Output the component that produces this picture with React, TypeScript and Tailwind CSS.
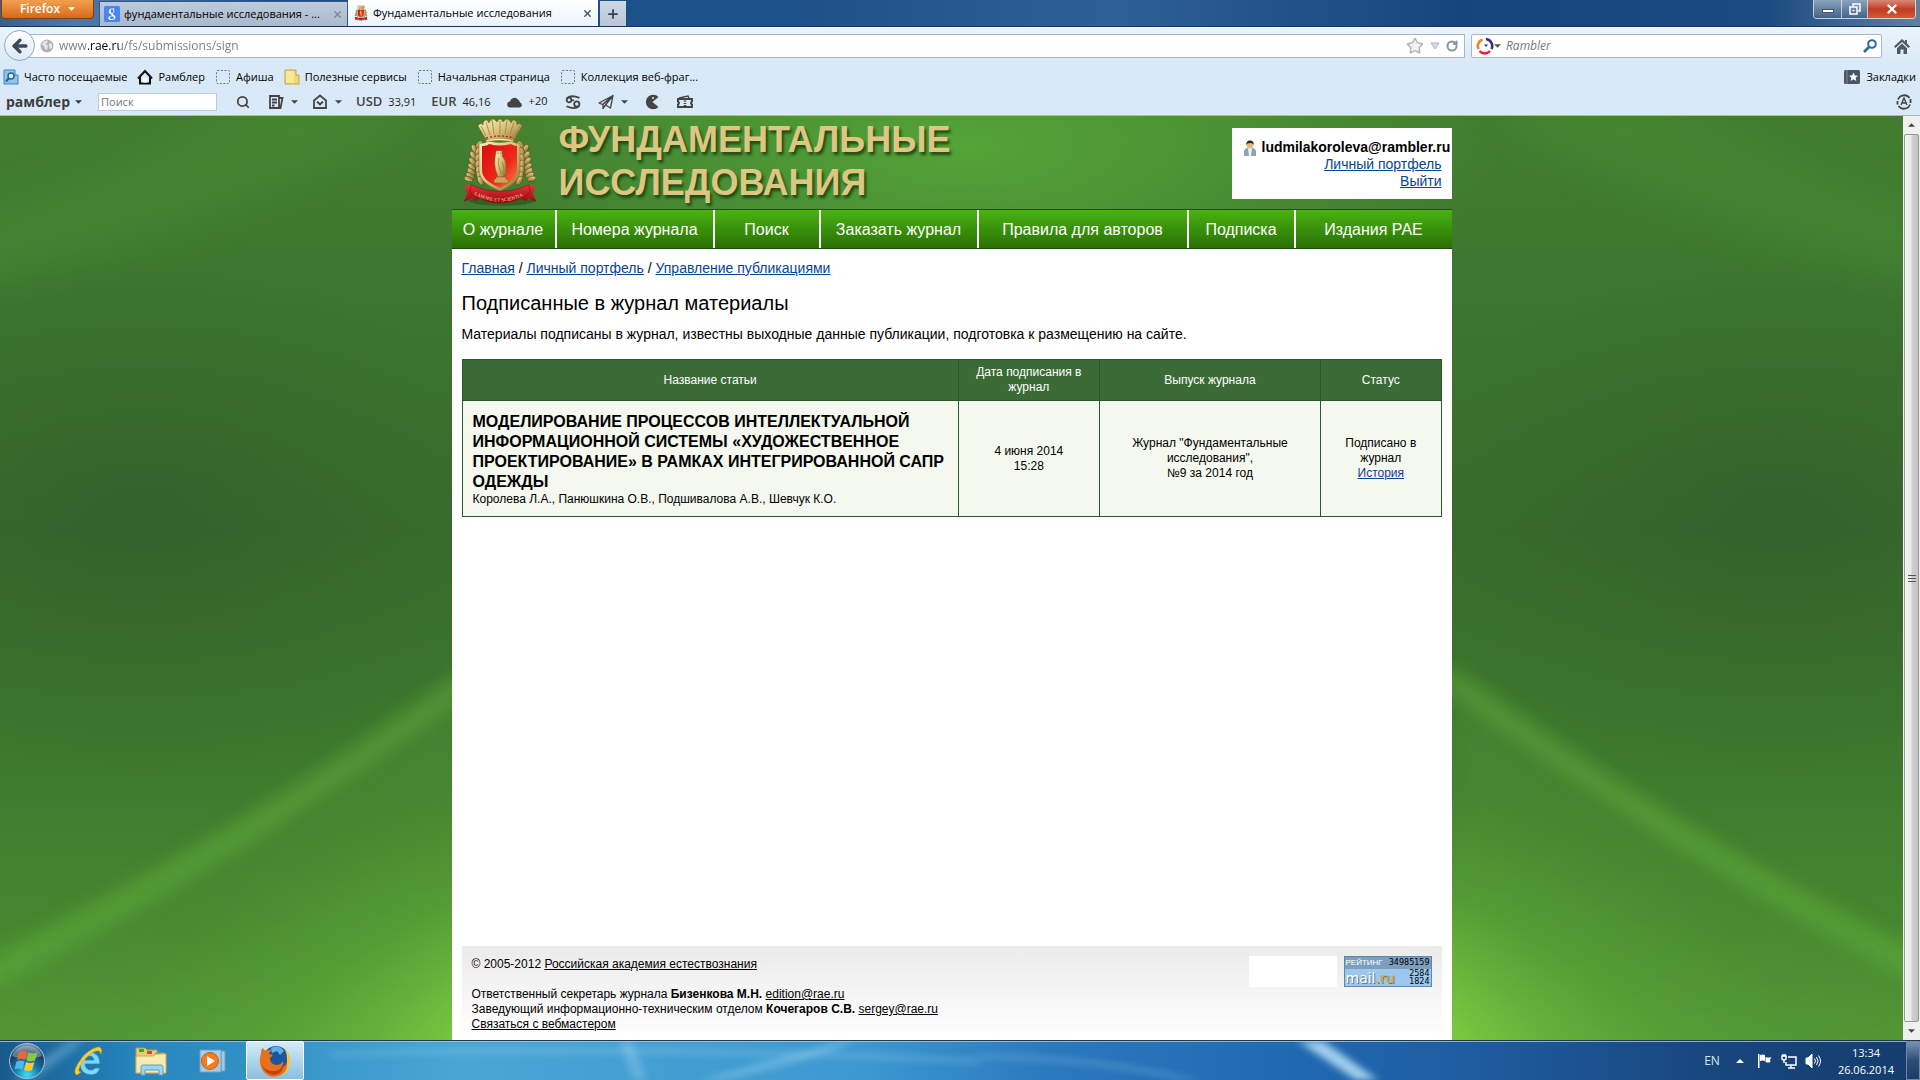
import React from 'react';
import { Search, RotateCw, Star, ArrowLeft, X, Plus } from 'lucide-react';

const navItems = [
  { title: 'О журнале', width: 'w-[10.5%]' },
  { title: 'Номера журнала', width: 'w-[15.8%]' },
  { title: 'Поиск', width: 'w-[10.6%]' },
  { title: 'Заказать журнал', width: 'w-[15.8%]' },
  { title: 'Правила для авторов', width: 'w-[21%]' },
  { title: 'Подписка', width: 'w-[10.7%]' },
  { title: 'Издания РАЕ', width: 'w-[15.6%]' },
];

const bookmarks = [
  { title: 'Часто посещаемые', icon: 'often' },
  { title: 'Рамблер', icon: 'home' },
  { title: 'Афиша', icon: 'blank' },
  { title: 'Полезные сервисы', icon: 'folder' },
  { title: 'Начальная страница', icon: 'blank' },
  { title: 'Коллекция веб-фраг...', icon: 'blank' },
];

const Caret = ({ className }: { className?: string }) => (
  <svg viewBox="0 0 8 4" className={`h-1 w-[7px] shrink-0 fill-current ${className ?? ''}`}>
    <path d="M0 0h8L4 4z" />
  </svg>
);

// Emblem with crown, shield, laurel wreath and ribbon
const Crest = ({ className }: { className?: string }) => {
  const leaves = [0, 1, 2, 3, 4, 5, 6];
  return (
    <svg viewBox="0 0 74 90" className={className}>
      <defs>
        <linearGradient id="gold" x1="0" y1="0" x2="1" y2="1">
          <stop offset="0" stopColor="#fbf3c4" />
          <stop offset="0.5" stopColor="#d8c07a" />
          <stop offset="1" stopColor="#8f7130" />
        </linearGradient>
        <linearGradient id="leaf" x1="0" y1="0" x2="1" y2="1">
          <stop offset="0" stopColor="#f6ebb4" />
          <stop offset="0.4" stopColor="#c8ae66" />
          <stop offset="1" stopColor="#6b5722" />
        </linearGradient>
        <linearGradient id="shield" x1="0" y1="0" x2="1" y2="1">
          <stop offset="0" stopColor="#d80d12" />
          <stop offset="0.6" stopColor="#ee281c" />
          <stop offset="1" stopColor="#f98a3a" />
        </linearGradient>
        <linearGradient id="ribbon" x1="0" y1="0" x2="0" y2="1">
          <stop offset="0" stopColor="#e8343a" />
          <stop offset="1" stopColor="#99060f" />
        </linearGradient>
      </defs>
      <ellipse cx="39" cy="82" rx="34" ry="6" fill="#173d10" opacity="0.4" />
      {/* crown */}
      <path d="M22 20 15 8q2-4 5-1 0-5 4-5l2 3q1-4 5-4l3 3q3-6 6 0l3-3q4 0 5 4l2-3q4 0 4 5 3-3 5 1l-7 12-1 3q-14-3-25 0z" fill="url(#gold)" stroke="#8a6b2c" strokeWidth="0.7" />
      <path d="m23 18-5-10m9 9-4-13m8 12-2-14m8 14V3m5 13 2-14m3 14 4-12m1 13 5-9" stroke="#9d7d39" strokeWidth="0.8" fill="none" />
      <path d="M23 20q14-4 28 0" stroke="#bd2b20" strokeWidth="1.400" strokeDasharray="2 2" fill="none" />
      <path d="M23 23q14-3 27 0" stroke="#f6e8a6" strokeWidth="1.400" fill="none" />
      {/* wreath */}
      {leaves.map(i => (
        <g key={i} fill="url(#leaf)" stroke="#51420f" strokeWidth="0.5">
          <ellipse cx={16 - i * 1.4 + (i * i) / 3} cy={27 + i * 6.6} rx="2.6" ry="4.8" transform={`rotate(${35 - i * 10} ${16 - i} ${27 + i * 7})`} />
          <ellipse cx={11 - i * 1.2 + (i * i) / 3} cy={31 + i * 6.4} rx="2.5" ry="4.6" transform={`rotate(${-25 - i * 8} ${11 - i} ${30 + i * 7})`} />
          <ellipse cx={58 + i * 1.4 - (i * i) / 3} cy={27 + i * 6.6} rx="2.6" ry="4.8" transform={`rotate(${-35 + i * 10} ${58 + i} ${27 + i * 7})`} />
          <ellipse cx={63 + i * 1.2 - (i * i) / 3} cy={31 + i * 6.4} rx="2.5" ry="4.6" transform={`rotate(${25 + i * 8} ${63 + i} ${30 + i * 7})`} />
        </g>
      ))}
      {/* shield */}
      <path d="M16 25q6 1 9-2 12 3 24 0 3 3 8 2v27c0 10-9 16-20 21-12-5-21-11-21-21z" fill="url(#gold)" stroke="#8f7130" strokeWidth="0.7" />
      <path d="M19 28q5 0 7-2 11 3 22 0 2 2 6 2v24c0 8-7 13-17 18-11-5-18-10-18-18z" fill="url(#shield)" />
      {/* owl */}
      <path d="M33 34q0-2 1-1 2-1 4 0 2-1 1 1 1 2 0 4 4 4 4 10v9h-2l-1 2h-5l-1-3q-4-9-1-22z" fill="url(#gold)" stroke="#7d5d25" strokeWidth="0.5" />
      <path d="M33 59h10v2h2v4H31v-4h2z" fill="#cda35a" stroke="#7d5d25" strokeWidth="0.5" />
      <path d="M36 40q-2 9 3 16m0-12q3 6 2 12" stroke="#92722f" strokeWidth="0.7" fill="none" />
      <circle cx="35" cy="35" r="0.6" fill="#4d3512" />
      <circle cx="38" cy="35" r="0.6" fill="#4d3512" />
      {/* ribbon */}
      <path d="M2 67h11l4 14-6 2-2-3-8 4 3-8z" fill="url(#ribbon)" />
      <path d="M72 67H61l-4 14 6 2 2-3 8 4-3-8z" fill="url(#ribbon)" />
      <path id="motto" d="M10 76q27 15 54 0" fill="none" />
      <path d="M8 67q29 13 58 0l1 8q-30 20-60 0z" fill="url(#ribbon)" stroke="#7d060d" strokeWidth="0.5" />
      <text fill="#f3d9a2" fontSize="5" fontFamily="Liberation Serif">
        <textPath href="#motto" startOffset="1">LABORE ET SCIENTIA</textPath>
      </text>
    </svg>
  );
};

const GoogleIcon = () => (
  <svg viewBox="0 0 16 16" className="size-4 shrink-0">
    <rect width="16" height="16" rx="1.500" fill="#4787ed" />
    <path d="M10.600 2.400H8C5.700 2.400 4.800 4 4.800 5.400 4.800 7 6 8 7.500 8c-.5.900-.1 1.300.2 1.700-2.200 0-3.400 1-3.400 2.200 0 1.300 1.400 2.100 3.200 2.100 2.400 0 3.900-1.100 3.900-2.800 0-2.300-2.500-2.100-2.500-3.200 0-.7 1.400-1.100 1.400-2.900 0-.9-.4-1.500-.8-1.900h.8zM8 3.100c1.800 0 2.100 4.200.2 4.200-1.700 0-2.200-4.200-.2-4.200zm0 7.200c2.700.2 2.500 2.900-.3 2.900-2.600 0-2.600-2.700.3-2.900z" fill="#fff" />
  </svg>
);

const BookmarkIcon = ({ icon }: { icon: string }) => {
  if (icon === 'home') {
    return (
      <svg viewBox="0 0 16 16" className="size-4 shrink-0" fill="none" stroke="#111" strokeWidth="2">
        <path d="M1 9.500 8 2l7 7.500M3 8v6.500h10V8" />
        <path d="M8 8.500v5" stroke="#fff" strokeWidth="4" />
      </svg>
    );
  }
  if (icon === 'folder') {
    return (
      <svg viewBox="0 0 16 16" className="size-4 shrink-0">
        <path d="M1 1h11v5h3v9H1z" fill="#f2d675" stroke="#c9a640" />
        <path d="M2 2h8v12H2z" fill="#fae79a" />
      </svg>
    );
  }
  if (icon === 'often') {
    return (
      <svg viewBox="0 0 16 16" className="size-4 shrink-0">
        <path d="M1 1h11v5h3v9H1z" fill="#8dc6ea" stroke="#3f86b8" />
        <circle cx="8" cy="7" r="3" fill="#d9effb" stroke="#27618d" strokeWidth="1.400" />
        <path d="m6 9-3 3.500" stroke="#27618d" strokeWidth="2" />
      </svg>
    );
  }
  return (
    <svg viewBox="0 0 16 16" className="size-4 shrink-0" fill="none" stroke="#707880">
      <rect x="1.500" y="1.500" width="13" height="13" rx="1" strokeDasharray="2 1.500" />
    </svg>
  );
};

const Tabs = () => (
  <div className="flex h-[27px] items-start border-b border-[#16365f] bg-[linear-gradient(90deg,#3a5f8c_0%,#5079a8_4%,#1c5088_14%,#1c5088_40%,#2d6096_58%,#164579_76%,#1a4a80_92%,#61809f_100%)]">
    <button className="ml-px flex h-[19px] w-[93px] items-center justify-center gap-2 rounded-b border border-t-0 border-[#8c3d0c] bg-linear-to-b from-[#f0a050] to-[#d9690f] text-xs font-semibold text-white">
      Firefox <Caret />
    </button>
    <div className="ml-[5px] flex h-[25px] w-[249px] items-center gap-1 self-end border-x border-t border-[#37587f] bg-linear-to-b from-[#bdcbdc] to-[#a9bacd] px-1 text-[11px] text-black">
      <GoogleIcon />
      <span className="flex-1 truncate">фундаментальные исследования - ...</span>
      <button aria-label="Закрыть"><X className="size-[11px] text-[#7c8896]" strokeWidth={3} /></button>
    </div>
    <div className="flex h-[26px] w-[250px] items-center gap-1 self-end bg-linear-to-b from-white to-[#eaf3fc] px-[5px] text-[11px] text-black">
      <Crest className="size-4 shrink-0" />
      <span className="flex-1 truncate">Фундаментальные исследования</span>
      <button aria-label="Закрыть"><X className="size-[11px] text-[#43505e]" strokeWidth={3} /></button>
    </div>
    <button aria-label="Новая вкладка" className="ml-0.5 flex h-[25px] w-[26px] items-center justify-center self-end bg-linear-to-b from-[#cdd9e5] to-[#b9c6d4]">
      <Plus className="size-3.5 text-[#34404d]" strokeWidth={3} />
    </button>
    <div className="mr-1 ml-auto flex h-[19px] overflow-hidden rounded-b border border-t-0 border-white/70">
      <button aria-label="Свернуть" className="flex w-7 items-center justify-center border-r border-white/60 bg-linear-to-b from-[#8ba2bb] to-[#45648a]">
        <span className="mt-1 h-1 w-3 border border-[#44566c] bg-white" />
      </button>
      <button aria-label="Восстановить" className="flex w-[26px] items-center justify-center border-r border-white/60 bg-linear-to-b from-[#8ba2bb] to-[#45648a]">
        <svg viewBox="0 0 12 12" className="size-3" fill="none" stroke="#fff" strokeWidth="1.500">
          <path d="M4 3V1h7v7H9" />
          <rect x="1" y="4" width="7" height="7" />
          <path d="M3.500 7.500h2" />
        </svg>
      </button>
      <button aria-label="Закрыть окно" className="flex w-[47px] items-center justify-center bg-linear-to-b from-[#d98878] via-[#c23a22] to-[#d55a38]">
        <X className="size-3.5 text-white" strokeWidth={4} />
      </button>
    </div>
  </div>
);

const AddressBar = () => (
  <div className="flex h-[37px] items-center bg-linear-to-b from-[#ebf4fc] to-[#dae9f7] pr-2.5 pl-1">
    <button aria-label="Назад" className="z-10 flex size-[31px] items-center justify-center rounded-full border border-[#93a7c0] bg-linear-to-b from-white to-[#dce9f6]">
      <ArrowLeft className="size-5 text-[#39485a]" strokeWidth={4} />
    </button>
    <div className="-ml-2 flex h-6 flex-1 items-center border border-[#a5b6cd] bg-white pr-1.5 pl-3">
      <svg viewBox="0 0 14 14" className="size-3.5 shrink-0">
        <circle cx="7" cy="7" r="6.500" fill="#b1b1b1" />
        <path d="M3 3q3-2 5-1L6 5l2 2-1 4-2-1-1-3-2-1zm6 1 3 1v4l-2 1-1-3z" fill="#e6e6e6" />
      </svg>
      <input
        aria-label="Адрес"
        defaultValue="www.rae.ru/fs/submissions/sign"
        className="ml-[5px] min-w-0 flex-1 bg-[linear-gradient(90deg,#7b7b7b_29px,#000_29px,#000_60px,#7b7b7b_60px)] bg-clip-text text-xs text-transparent outline-none"
      />
      <Star className="size-[18px] fill-[#f3f3f3] text-[#b4b4b4]" strokeWidth={2} />
      <svg viewBox="0 0 10 8" className="mx-1.5 h-2 w-2.5"><path d="M1 1h8L5 7z" fill="#d3dbe4" stroke="#a9b5c3" /></svg>
      <button aria-label="Обновить"><RotateCw className="size-3 text-[#8694a5]" strokeWidth={4} /></button>
    </div>
    <div className="ml-1.5 flex h-6 w-[411px] items-center rounded-xs border border-[#a5b6cd] bg-white px-1">
      <svg viewBox="0 0 18 18" className="size-[18px] shrink-0" fill="none" strokeWidth="2.600">
        <path d="M2.500 12A7 7 0 0 1 6.500 2.500" stroke="#f58220" />
        <path d="M10 2a7 7 0 0 1 5.500 10" stroke="#2f318f" />
        <path d="M8 7.500h4L10 10z" fill="#2f318f" />
        <path d="M3.500 14a7 7 0 0 0 10.500 0" stroke="#ee1c3c" />
      </svg>
      <Caret className="text-[#555]" />
      <input aria-label="Rambler" placeholder="Rambler" className="ml-[5px] min-w-0 flex-1 text-xs italic outline-none placeholder:text-[#777]" />
      <svg viewBox="0 0 14 14" className="size-3.5" fill="none" stroke="#2d69a5">
        <circle cx="9" cy="5" r="3.800" strokeWidth="2" />
        <path d="m6 8-5 5" strokeWidth="2.600" />
      </svg>
    </div>
    <button aria-label="Домашняя страница" className="ml-3">
      <svg viewBox="0 0 16 16" className="size-4" fill="#4e5a68">
        <path d="M8 1 0 8.500 1.500 10 8 4l6.500 6L16 8.500l-3-3V2h-2v1.800z" />
        <path d="m8 5.500-5 4.700V16h3.500v-4.500h3V16H13v-5.800z" />
      </svg>
    </button>
  </div>
);

const BookmarksBar = () => (
  <div className="flex h-[26px] items-center bg-[#dae9f7] pr-1 pl-[3px] text-[11px] text-black">
    <nav className="flex flex-1 items-center gap-2.5">
      {bookmarks.map(item => (
        <a key={item.title} href="#" className="flex items-center gap-[5px] whitespace-nowrap">
          <BookmarkIcon icon={item.icon} />
          {item.title}
        </a>
      ))}
    </nav>
    <a href="#" className="flex items-center gap-1.5">
      <svg viewBox="0 0 16 14" className="h-3.5 w-4">
        <rect width="16" height="14" rx="1.500" fill="#4a5666" />
        <path d="M3 0v14" stroke="#7f8b99" />
        <path d="m9.500 2.500 1.300 2.900 3.200.3-2.400 2.100.7 3.100-2.800-1.600-2.800 1.600.7-3.100L5 5.700l3.200-.3z" fill="#fff" />
      </svg>
      Закладки
    </a>
  </div>
);

const RamblerBar = () => (
  <div className="flex h-[26px] items-center border-b border-[#a4b8d0] bg-[#dae9f7] pr-2 pb-0.5 pl-1.5 text-[11px] text-[#222]">
    <a href="#" className="flex w-[92px] items-center gap-[5px] text-sm font-bold text-[#3d3d3d]">
      рамблер <Caret />
    </a>
    <input aria-label="Поиск" placeholder="Поиск" className="h-[18px] w-[119px] border border-[#bccbdc] bg-white px-0.5 text-[11px] outline-none placeholder:text-[#777]" />
    <Search className="ml-[19px] size-3.5 text-[#444]" strokeWidth={3} />
    <span className="ml-[18px] flex items-center gap-[7px] text-[#444]">
      <svg viewBox="0 0 16 16" className="size-4" fill="none" stroke="currentColor" strokeWidth="1.800">
        <path d="M2 2h9v12H2zM11 4h3.500l-2 10H11" />
        <path d="M4 5.500h5M4 8.500h5M4 11.500h2.500" />
      </svg>
      <Caret />
    </span>
    <span className="ml-3.5 flex items-center gap-[7px] text-[#444]">
      <svg viewBox="0 0 16 16" className="size-4" fill="none" stroke="currentColor" strokeWidth="1.800">
        <path d="M2 6.500 8 1.500l6 5V14H2z" />
        <path d="M5 7.500 8 10.500l3-3" />
      </svg>
      <Caret />
    </span>
    <span className="ml-3.5 flex items-baseline gap-1.5"><b className="text-[13px] font-semibold text-[#444]">USD</b> 33,91</span>
    <span className="ml-[15px] flex items-baseline gap-1.5"><b className="text-[13px] font-semibold text-[#444]">EUR</b> 46,16</span>
    <svg viewBox="0 0 16 12" className="ml-4 h-3 w-4" fill="#444">
      <path d="M3.500 11.500a3 3 0 0 1-.5-6A4.500 4.500 0 0 1 11 3.500a4.500 4.500 0 0 1 2 3 2.600 2.600 0 0 1 0 5z" />
    </svg>
    <span className="ml-1.5">+20</span>
    <svg viewBox="0 0 16 16" className="ml-[18px] size-4" fill="none" stroke="#444" strokeWidth="1.800">
      <circle cx="4" cy="6" r="2.300" />
      <circle cx="11.800" cy="10" r="2.600" />
      <path d="M2 4.200Q6 .5 14.500 3.800M14 12Q10 16 1.500 12.200M7 6.500 9 6" />
    </svg>
    <span className="ml-[17px] flex items-center gap-[7px] text-[#444]">
      <svg viewBox="0 0 16 16" className="size-4" fill="none" stroke="currentColor" strokeWidth="1.300" strokeLinejoin="round">
        <path d="M15 1.500 1 9l3.500 1.500zM15 1.500l-2.500 12.500-5-3zM15 1.500l-10 9v4l2.500-3.500" />
      </svg>
      <Caret />
    </span>
    <svg viewBox="0 0 16 16" className="ml-4 size-4" fill="#444">
      <path d="M14.500 3A7.300 7.300 0 1 0 14.500 13L8.500 8z" />
      <circle cx="9" cy="4" r="1" fill="#dae9f7" />
    </svg>
    <svg viewBox="0 0 18 16" className="ml-4 h-4 w-[18px]" fill="none" stroke="#444" strokeWidth="2">
      <path d="M2 5h14v2.500q-2 1.500 0 3V13H2v-2.500q2-1.500 0-3z" />
      <path d="m3 4 9-2 1 2" strokeWidth="1.500" />
      <path d="M9 6.500v1.200m0 1.200v1.200m0 1v1" strokeWidth="2.500" />
    </svg>
    <svg viewBox="0 0 16 16" className="ml-auto size-4" fill="none" stroke="#444" strokeWidth="1.800">
      <path d="M14 10.500A6.600 6.600 0 0 1 2.500 12M2 5.500A6.600 6.600 0 0 1 13.500 4M1.500 10.500V7m13-2v4" />
      <path d="m5 11 3-7 3 7M6 9h4" strokeWidth="1.400" />
    </svg>
  </div>
);

// Green waves behind the site, the right half mirrors the left one
const Backdrop = () => (
  <svg viewBox="0 0 1904 924" preserveAspectRatio="none" className="absolute inset-0 size-full">
    <defs>
      <linearGradient id="base" x1="0" y1="0" x2="0" y2="1">
        <stop offset="0" stopColor="#427d2f" />
        <stop offset="0.15" stopColor="#3e7830" />
        <stop offset="0.45" stopColor="#386c2d" />
        <stop offset="0.7" stopColor="#3e792e" />
        <stop offset="0.88" stopColor="#478830" />
        <stop offset="1" stopColor="#529635" />
      </linearGradient>
      <radialGradient id="glow">
        <stop offset="0" stopColor="#8ade45" />
        <stop offset="0.600" stopColor="#7dcc42" stopOpacity="0.95" />
        <stop offset="0.8" stopColor="#66b23a" stopOpacity="0.4" />
        <stop offset="1" stopColor="#58a236" stopOpacity="0" />
      </radialGradient>
      <radialGradient id="top">
        <stop offset="0" stopColor="#54a438" />
        <stop offset="1" stopColor="#54a438" stopOpacity="0" />
      </radialGradient>
      <radialGradient id="dark">
        <stop offset="0" stopColor="#305b29" stopOpacity="0.6" />
        <stop offset="1" stopColor="#305b29" stopOpacity="0" />
      </radialGradient>
      <linearGradient id="band" x1="0" y1="1" x2="0.5" y2="0">
        <stop offset="0" stopColor="#5aa437" stopOpacity="0" />
        <stop offset="1" stopColor="#5aa437" stopOpacity="0.3" />
      </linearGradient>
      <filter id="soft"><feGaussianBlur stdDeviation="9" /></filter>
      <filter id="softer" x="-0.5" y="-0.5" width="2" height="2"><feGaussianBlur stdDeviation="22" /></filter>
      <g id="half">
        <path d="M-40 170Q200 110 380 20L420-20H260Q150 60 -40 100z" fill="#4c9335" opacity="0.400" filter="url(#softer)" />
        <path d="M-20 848Q235 720 470 548V576Q250 740 -20 878z" fill="#63b03c" opacity="0.500" filter="url(#soft)" />
        <path d="M-20 860Q240 750 470 570V940H-20z" fill="url(#band)" filter="url(#softer)" />
        <ellipse cx="140" cy="400" rx="380" ry="260" fill="url(#dark)" />
      </g>
    </defs>
    <rect width="1904" height="924" fill="url(#base)" />
    <use href="#half" />
    <use href="#half" transform="matrix(-1 0 0 1 1904 0)" />
    <ellipse cx="952" cy="1000" rx="860" ry="400" fill="url(#glow)" />
    <ellipse cx="960" cy="30" rx="520" ry="200" fill="url(#top)" />
  </svg>
);

const SiteHeader = () => (
  <header className="flex h-[93px] items-start">
    <a href="#" className="flex items-start">
      <Crest className="mt-0.5 ml-2.5 h-[90px] w-[76px]" />
      <h1 className="mt-0.5 ml-[21px] text-4xl leading-[43px] font-bold text-[#dcc681] [text-shadow:2px_3px_3px_#1d4a12]">
        ФУНДАМЕНТАЛЬНЫЕ<br />ИССЛЕДОВАНИЯ
      </h1>
    </a>
    <div className="mt-3 ml-auto w-[220px] bg-white px-2.5 pt-[11px] pb-[9px] text-right text-sm leading-[17px]">
      <div className="flex items-center gap-1 font-bold whitespace-nowrap text-black">
        <svg viewBox="0 0 16 16" className="size-4 shrink-0">
          <path d="M2 16v-4q0-4 4-4h4q4 0 4 4v4z" fill="#8fa3b8" />
          <path d="M6 8h4l-1 8H7z" fill="#eef3f8" />
          <circle cx="8" cy="5" r="3.400" fill="#e8b77c" />
          <path d="M4.200 5Q4 .5 8 .500T11.800 5Q11 3 8 3T4.200 5z" fill="#2b2b2b" />
        </svg>
        ludmilakoroleva@rambler.ru
      </div>
      <a href="#" className="text-[#0a4394] underline">Личный портфель</a><br />
      <a href="#" className="text-[#0a4394] underline">Выйти</a>
    </div>
  </header>
);

const SubmissionsTable = () => (
  <table className="mt-4 w-full table-fixed border-collapse border border-[#2a562c] text-center text-xs leading-[15px] text-black">
    <colgroup>
      <col className="w-[50.7%]" />
      <col className="w-[14.4%]" />
      <col className="w-[22.6%]" />
      <col className="w-[12.3%]" />
    </colgroup>
    <thead>
      <tr className="bg-[#3a6b36] text-white">
        {['Название статьи', 'Дата подписания в журнал', 'Выпуск журнала', 'Статус'].map(title => (
          <th key={title} className="border border-[#2a562c] px-2.5 py-[5px] font-normal">{title}</th>
        ))}
      </tr>
    </thead>
    <tbody>
      <tr className="bg-[#f4f8ee]">
        <td className="border border-[#2a562c] px-2.5 pt-[11px] pb-[9px] text-left">
          <p className="text-base leading-5 font-bold">
            МОДЕЛИРОВАНИЕ ПРОЦЕССОВ ИНТЕЛЛЕКТУАЛЬНОЙ ИНФОРМАЦИОННОЙ СИСТЕМЫ «ХУДОЖЕСТВЕННОЕ ПРОЕКТИРОВАНИЕ» В РАМКАХ ИНТЕГРИРОВАННОЙ САПР ОДЕЖДЫ
          </p>
          Королева Л.А., Панюшкина О.В., Подшивалова А.В., Шевчук К.О.
        </td>
        <td className="border border-[#2a562c] p-2.5">4 июня 2014<br />15:28</td>
        <td className="border border-[#2a562c] p-2.5">Журнал "Фундаментальные исследования",<br />№9 за 2014 год</td>
        <td className="border border-[#2a562c] p-2.5">
          Подписано в журнал<br />
          <a href="#" className="text-[#0a4394] underline">История</a>
        </td>
      </tr>
    </tbody>
  </table>
);

const SiteFooter = () => (
  <footer className="mx-2.5 mt-auto flex items-start bg-linear-to-b from-[#ebebeb] to-white px-2.5 pt-2.5 pb-2 text-xs leading-[15px] text-black">
    <div className="flex-1 pt-px">
      <p>© 2005-2012 <a href="#" className="underline">Российская академия естествознания</a></p>
      <p className="mt-[15px]">Ответственный секретарь журнала <b>Бизенкова М.Н.</b> <a href="#" className="underline">edition@rae.ru</a></p>
      <p>Заведующий информационно-техническим отделом <b>Кочегаров С.В.</b> <a href="#" className="underline">sergey@rae.ru</a></p>
      <p><a href="#" className="underline">Связаться с вебмастером</a></p>
    </div>
    <div className="mr-[7px] h-[31px] w-[88px] bg-white" />
    <a href="#" className="flex h-[31px] w-[88px] flex-col border border-[#5f86ad] bg-[#9cc7ee]">
      <span className="flex h-3 items-center justify-between bg-[#7d9fbd] px-px">
        <span className="text-[8px] leading-3 text-white">РЕЙТИНГ</span>
        <span className="font-['DejaVu_Sans',sans-serif] text-[8px] leading-3">34985159</span>
      </span>
      <span className="flex flex-1 items-center justify-between px-px">
        <span className="font-['DejaVu_Sans',sans-serif] text-sm leading-4 text-white [text-shadow:1px_1px_0_#5d6f86]">mail<span className="text-[#f0a800]">.ru</span></span>
        <span className="text-right font-['DejaVu_Sans',sans-serif] text-[8px] leading-2">2584<br />1824</span>
      </span>
    </a>
  </footer>
);

const Scrollbar = () => (
  <div className="relative z-10 flex w-[17px] shrink-0 flex-col items-center bg-[#f0f0f0] text-[#444]">
    <Caret className="my-[7px] rotate-180" />
    <div className="flex w-[15px] flex-1 flex-col items-center justify-center gap-px rounded-xs border border-[#979797] bg-[linear-gradient(90deg,#f5f5f5,#e9e9eb_45%,#cfcfd2_55%,#c3c3c7)]">
      <span className="h-px w-2 bg-[#555]" />
      <span className="mt-px h-px w-2 bg-[#555]" />
      <span className="mt-px h-px w-2 bg-[#555]" />
    </div>
    <Caret className="my-[7px]" />
  </div>
);

const Taskbar = () => (
  <footer className="relative flex h-10 items-stretch overflow-hidden border-t border-[#22384f] bg-[linear-gradient(90deg,#185a8c_0%,#2585bd_7%,#4aa6d4_24%,#3c98d0_45%,#2a78bd_55%,#2068b0_68%,#1e5a9c_78%,#184881_88%,#153c6c_100%)]">
    <svg viewBox="0 0 1920 40" preserveAspectRatio="none" className="absolute inset-0 size-full">
      <defs><filter id="haze"><feGaussianBlur stdDeviation="4" /></filter></defs>
      <path d="M0 0h1920v1H0z" fill="#a8cbe8" opacity="0.8" />
      <g fill="#b8e4f8" filter="url(#haze)">
        <path d="M1298 0h25l55 40h-22z" opacity="0.85" />
        <path d="M10 40 70 0h14L34 40z" opacity="0.3" />
        <path d="M620 0h12l14 40h-12z" opacity="0.3" />
        <path d="M700 40Q780 18 840 0h16Q800 24 720 40z" opacity="0.35" />
        <path d="M330 12Q600 0 980 18v5Q600 6 330 16z" opacity="0.25" />
        <path d="M980 14q120 0 220 26h-20Q1090 20 980 18z" opacity="0.25" />
      </g>
    </svg>
    <button aria-label="Пуск" className="relative flex w-[54px] items-center justify-center">
      <svg viewBox="0 0 38 38" className="size-[38px]">
        <defs>
          <radialGradient id="orb" cx="0.5" cy="0.9" r="0.9">
            <stop offset="0" stopColor="#3fe0ff" />
            <stop offset="0.4" stopColor="#1476a8" />
            <stop offset="0.75" stopColor="#1a3c5e" />
            <stop offset="1" stopColor="#7f9fb8" />
          </radialGradient>
        </defs>
        <circle cx="19" cy="19" r="17.500" fill="url(#orb)" stroke="#a3c3da" />
        <path d="M4 14a16 16 0 0 1 30 0q-15 6-30 0z" fill="#fff" opacity="0.3" />
        <path d="M11 10q4-2 8 0l-2 8q-4-2-8 0z" fill="#f1643a" />
        <path d="M20.500 10.500q4 2 9 0l-2.500 8q-4 2-8.500 0z" fill="#8bc83d" />
        <path d="M8.500 19.500q4-2 8 0l-2 8q-4-2-8 0z" fill="#4eb8ee" />
        <path d="M18 20q4 2 8.500 0l-2.500 8q-4 2-8 0z" fill="#fdc82e" />
      </svg>
    </button>
    <button aria-label="Internet Explorer" className="relative flex w-[68px] items-center justify-center">
      <svg viewBox="0 0 32 32" className="size-8" fill="none">
        <path d="M28 19H13q1 6 6 6 3 0 4-2h5q-2 7-9 7-11-1-11-11Q9 8 18 7q10 1 10 12zM13 15h9q-1-4-4-4-4 0-5 4z" fill="#7fd6f8" stroke="#2683bd" strokeWidth="0.8" />
        <path d="M5 30Q0 28 7 17 16 4 26 2q5 0 3 7-1-4-5-3Q17 8 10 18 4 27 9 27z" fill="#f8cd35" stroke="#d59f18" strokeWidth="0.600" />
      </svg>
    </button>
    <button aria-label="Проводник" className="relative flex w-[58px] items-center justify-center">
      <svg viewBox="0 0 32 30" className="h-[30px] w-8">
        <path d="M1 6V2h9l2 2h10v3h8v20H1z" fill="#e8cc76" stroke="#ba9740" />
        <path d="M4 3h5v3H4z" fill="#35a83b" />
        <path d="M12 5h5v3h-5z" fill="#d8492b" />
        <path d="M20 7h6v3h-6z" fill="#3d8fdd" />
        <path d="M1 10h17l3-2h10v19H1z" fill="#f9eab0" stroke="#cdac57" />
        <path d="M6 29v-8q0-2 2-2h18q2 0 2 2v8h-4v-5H10v5z" fill="#9fd5ee" stroke="#5ba0c4" />
      </svg>
    </button>
    <button aria-label="Проигрыватель" className="relative flex w-[66px] items-center justify-center">
      <svg viewBox="0 0 30 28" className="h-7 w-[30px]">
        <path d="M23 4h4v20h-4z" fill="#9cc9e4" stroke="#6b9fc4" />
        <path d="M2 3h21v22H2z" fill="#a3cfe6" stroke="#709fc0" />
        <circle cx="12" cy="14" r="8.500" fill="#f47b20" stroke="#d65c0c" />
        <path d="m9 9 8 5-8 5z" fill="#fff" />
      </svg>
    </button>
    <button aria-label="Firefox" className="relative flex w-[58px] items-center justify-center rounded-xs border border-white bg-linear-to-b from-[#d3ebf7] to-[#8ac0e0]">
      <svg viewBox="0 0 34 34" className="size-[34px]">
        <circle cx="18" cy="15" r="13" fill="#1d55a0" />
        <path d="M13 4q8-4 13 3l-4 4-3-4-5 2z" fill="#5fb0e6" />
        <path d="M26 4q7 6 6 14-1 11-11 14 9-8 8-16 0-7-3-12z" fill="#fbc431" />
        <path d="M3 9q0-4 2-5 1 2 3 3 3-2 6-1-3 2-3 4l4 1-3 3q0 6 6 7 5 0 7-4 1 4-2 7 4-1 6-6 1 9-6 13-11 5-18-4-4-7-3-13z" fill="#e8701a" />
        <path d="M3 19q4 9 13 8 5 0 9-5 0 8-9 9Q6 30 3 19z" fill="#c2410f" />
      </svg>
    </button>
    <div className="relative ml-auto flex items-center text-white">
      <span className="text-xs text-[#d8e4ef]">EN</span>
      <svg viewBox="0 0 8 4" className="ml-4 h-1 w-2 fill-white"><path d="M0 4h8L4 0z" /></svg>
      <svg viewBox="0 0 16 16" className="ml-[13px] size-4" fill="#fff">
        <path d="M1 1h1.500v14H1zM3 2q3-1 5 0v6q-2-1-5 0zM8.500 4q3 1 6 0l-1.500 3 .5 2q-3 1-5 0z" />
      </svg>
      <svg viewBox="0 0 16 16" className="ml-2 size-4" fill="none" stroke="#fff" strokeWidth="1.500">
        <path d="M7 4h8v8H5V9M7 15h7M10 12v3" />
        <path d="M1 3h4v3q-2 2-4 0zM3 7v3M2 1v2m2-2v2" />
      </svg>
      <svg viewBox="0 0 16 16" className="ml-2 size-4" fill="none" stroke="#fff">
        <path d="M1 5h2l4-4v14l-4-4H1z" fill="#fff" />
        <path d="M9.500 5.500q2 2.500 0 5M11.500 4q3 4 0 8M13.500 2.500q4 5.500 0 11" />
      </svg>
      <time className="ml-[17px] text-center text-[11px] leading-[17px]">13:34<br />26.06.2014</time>
      <button aria-label="Свернуть все окна" className="ml-3 h-full w-3.5 border border-[#6f8aa8] bg-linear-to-b from-[#7a93ad] via-[#2b4d77] to-[#1c3d68]" />
    </div>
  </footer>
);

export default function App() {
  return (
    <div className="flex h-screen flex-col overflow-hidden font-['Open_Sans','Noto_Sans',sans-serif]">
      <Tabs />
      <AddressBar />
      <BookmarksBar />
      <RamblerBar />
      <div className="relative flex min-h-0 flex-1">
        <Backdrop />
        <main className="relative flex min-w-0 flex-1 font-['Liberation_Sans',Arial,sans-serif]">
          <div className="mx-auto flex w-full max-w-[1000px] flex-col">
            <SiteHeader />
            <nav className="flex h-10 border-y border-[#1f4d0c] bg-linear-to-b from-[#48b410] to-[#2b7006]">
              {navItems.map(item => (
                <a key={item.title} href="#" className={`flex items-center justify-center border-r-2 border-white pt-0.5 text-base text-white last:border-r-0 ${item.width}`}>
                  {item.title}
                </a>
              ))}
            </nav>
            <div className="flex flex-1 flex-col bg-white">
              <div className="px-2.5 pt-[11px] text-sm leading-[17px] text-black">
                <p>
                  <a href="#" className="text-[#0a4394] underline">Главная</a> / <a href="#" className="text-[#0a4394] underline">Личный портфель</a> / <a href="#" className="text-[#0a4394] underline">Управление публикациями</a>
                </p>
                <h2 className="mt-3.5 text-xl leading-6">Подписанные в журнал материалы</h2>
                <p className="mt-[11px]">Материалы подписаны в журнал, известны выходные данные публикации, подготовка к размещению на сайте.</p>
                <SubmissionsTable />
              </div>
              <SiteFooter />
            </div>
          </div>
        </main>
        <Scrollbar />
      </div>
      <Taskbar />
    </div>
  );
}
